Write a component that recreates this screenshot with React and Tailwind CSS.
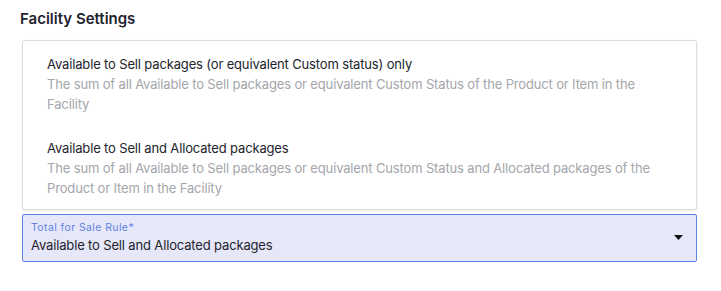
export default function App() {
  const options = [
    {
      title: 'Available to Sell packages (or equivalent Custom status) only',
      desc: 'The sum of all Available to Sell packages or equivalent Custom Status of the Product or Item in the Facility',
    },
    {
      title: 'Available to Sell and Allocated packages',
      desc: 'The sum of all Available to Sell packages or equivalent Custom Status and Allocated packages of the Product or Item in the Facility',
    },
  ]

  return (
    <div className="w-[721px] h-[291px] bg-white pl-[22px] pr-[24px] pt-[8px]" style={{ fontFamily: 'Inter, "Liberation Sans", sans-serif' }}>
      <h2 className="-ml-[2px] text-[15px] leading-[22px] font-semibold text-[#1f2330]">Facility Settings</h2>

      {/* option list */}
      <div className="mt-[10px] h-[170px] border border-[#dcdde3] rounded-[2px] shadow-[0_1px_2px_rgba(0,0,0,0.08)] pl-[24px] pr-[40px] pt-[13px] flex flex-col gap-[24px]">
        {options.map(({ title, desc }) => (
          <div key={title} className="tracking-[-0.15px]">
            <p className="text-[13px] leading-[20px] text-[#22242c]">{title}</p>
            <p className="text-[13px] leading-[20px] text-[#a4a6ab]">{desc}</p>
          </div>
        ))}
      </div>

      {/* select */}
      <div className="mt-[4px] h-[48px] border border-[#5b7fe3] rounded-[2px] bg-[#e6e7f8] pl-[8px] pr-[13px] flex items-center justify-between">
        <div className="flex flex-col">
          <span className="text-[10.5px] leading-[14px] tracking-[0.4px] text-[#6383e4]">Total for Sale Rule*</span>
          <span className="text-[13px] leading-[20px] tracking-[-0.15px] text-[#22242c]">Available to Sell and Allocated packages</span>
        </div>
        <svg width="9" height="5" viewBox="0 0 9 5" className="mb-[1px]">
          <path d="M0 0H9L4.5 5Z" fill="#111" />
        </svg>
      </div>
    </div>
  )
}
